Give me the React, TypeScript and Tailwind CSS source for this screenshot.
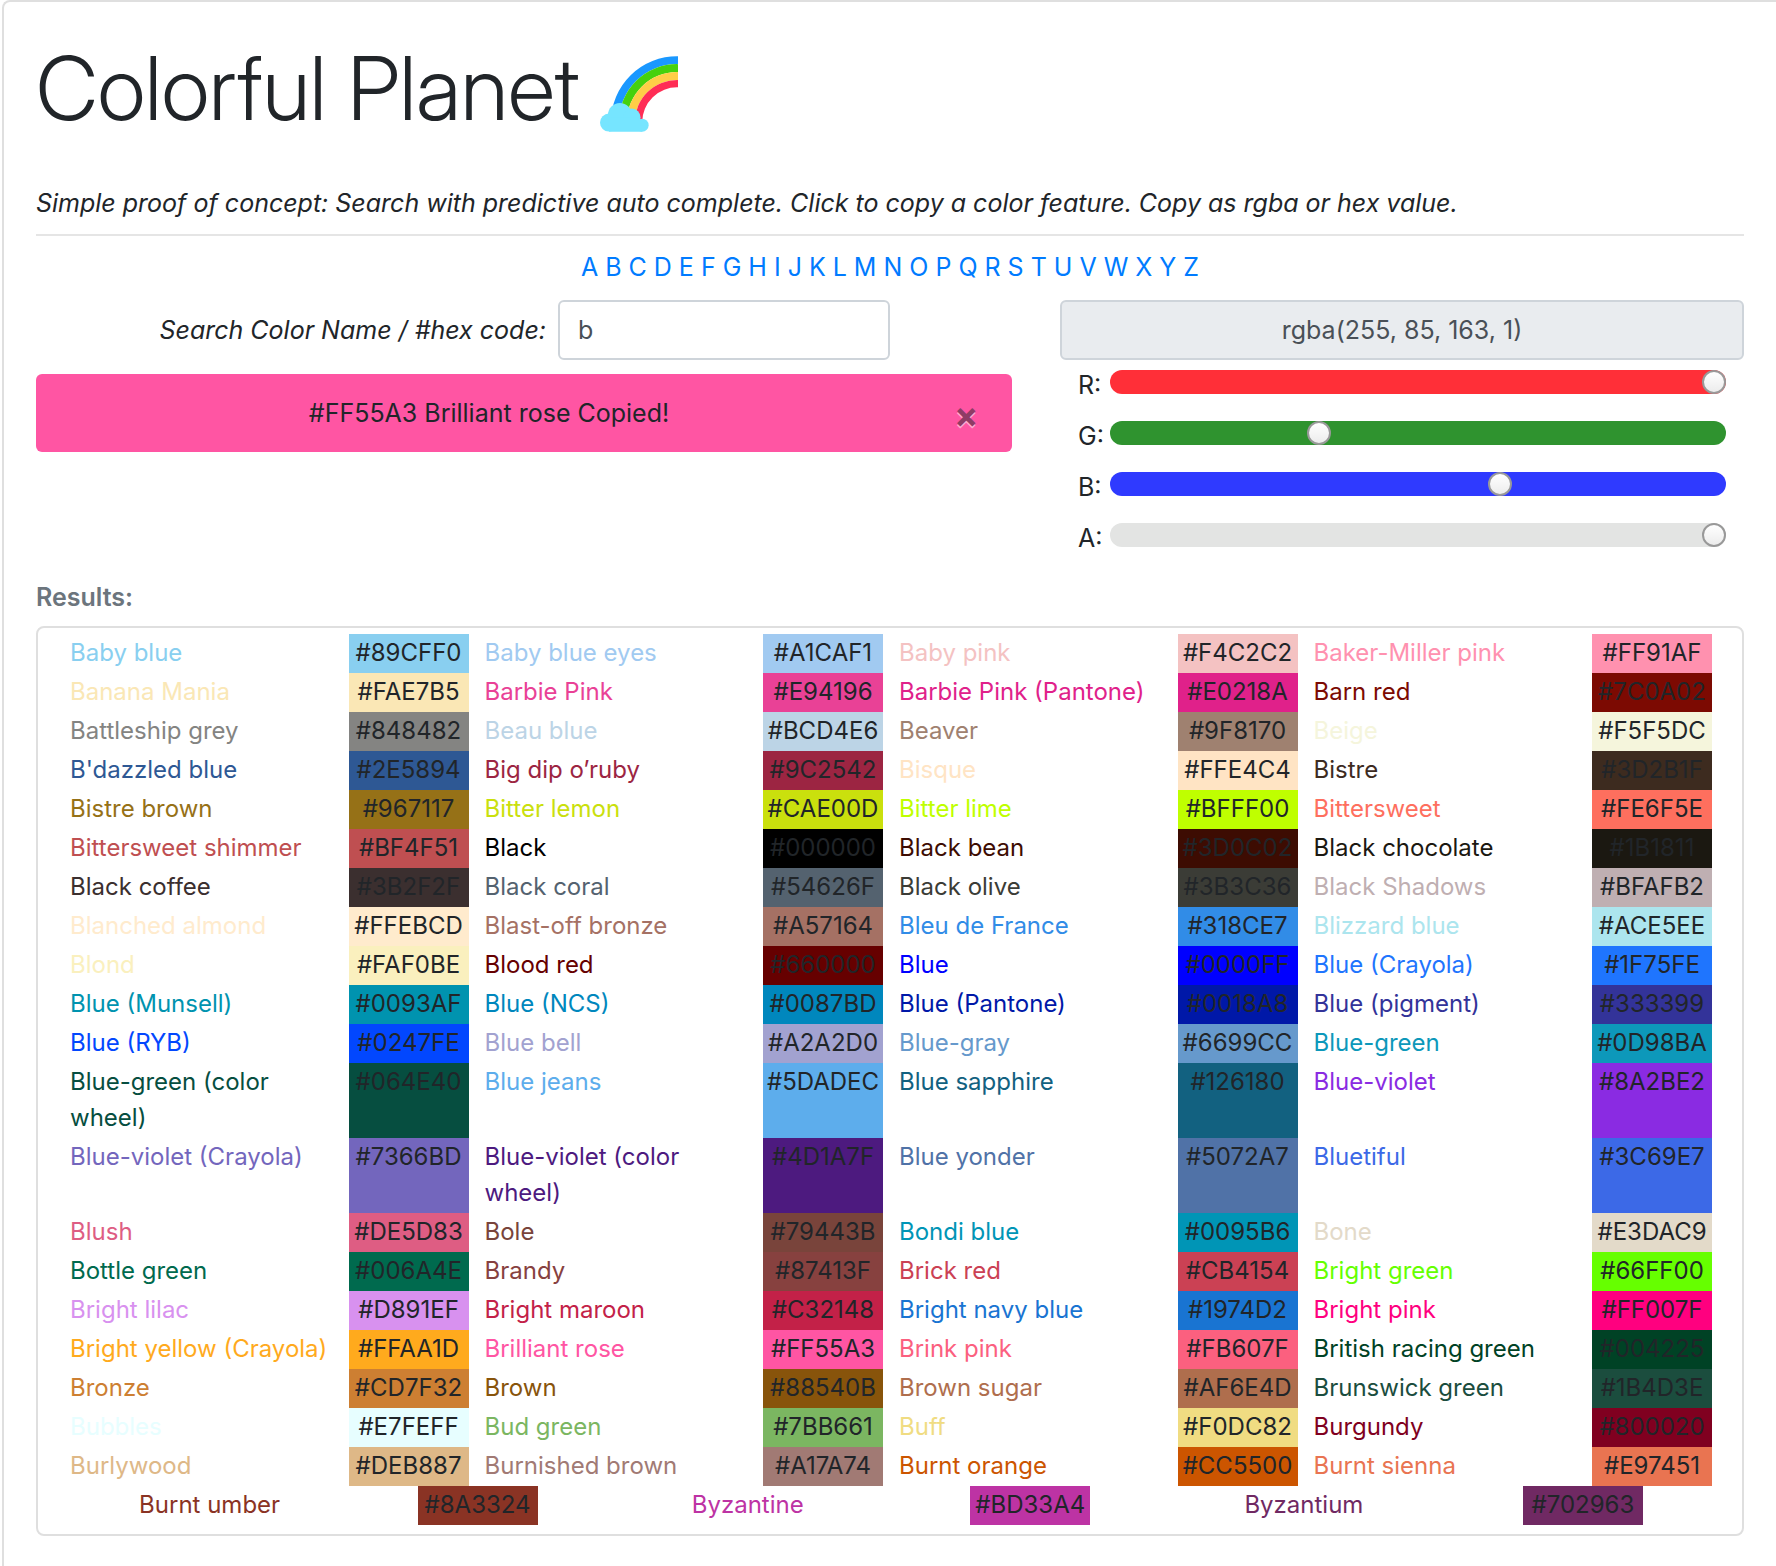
import { useState } from "react";

type Swatch = [name: string, hex: string];

const colors: Swatch[] = [
  ["Baby blue", "#89CFF0"],
  ["Baby blue eyes", "#A1CAF1"],
  ["Baby pink", "#F4C2C2"],
  ["Baker-Miller pink", "#FF91AF"],
  ["Banana Mania", "#FAE7B5"],
  ["Barbie Pink", "#E94196"],
  ["Barbie Pink (Pantone)", "#E0218A"],
  ["Barn red", "#7C0A02"],
  ["Battleship grey", "#848482"],
  ["Beau blue", "#BCD4E6"],
  ["Beaver", "#9F8170"],
  ["Beige", "#F5F5DC"],
  ["B'dazzled blue", "#2E5894"],
  ["Big dip o’ruby", "#9C2542"],
  ["Bisque", "#FFE4C4"],
  ["Bistre", "#3D2B1F"],
  ["Bistre brown", "#967117"],
  ["Bitter lemon", "#CAE00D"],
  ["Bitter lime", "#BFFF00"],
  ["Bittersweet", "#FE6F5E"],
  ["Bittersweet shimmer", "#BF4F51"],
  ["Black", "#000000"],
  ["Black bean", "#3D0C02"],
  ["Black chocolate", "#1B1811"],
  ["Black coffee", "#3B2F2F"],
  ["Black coral", "#54626F"],
  ["Black olive", "#3B3C36"],
  ["Black Shadows", "#BFAFB2"],
  ["Blanched almond", "#FFEBCD"],
  ["Blast-off bronze", "#A57164"],
  ["Bleu de France", "#318CE7"],
  ["Blizzard blue", "#ACE5EE"],
  ["Blond", "#FAF0BE"],
  ["Blood red", "#660000"],
  ["Blue", "#0000FF"],
  ["Blue (Crayola)", "#1F75FE"],
  ["Blue (Munsell)", "#0093AF"],
  ["Blue (NCS)", "#0087BD"],
  ["Blue (Pantone)", "#0018A8"],
  ["Blue (pigment)", "#333399"],
  ["Blue (RYB)", "#0247FE"],
  ["Blue bell", "#A2A2D0"],
  ["Blue-gray", "#6699CC"],
  ["Blue-green", "#0D98BA"],
  ["Blue-green (color wheel)", "#064E40"],
  ["Blue jeans", "#5DADEC"],
  ["Blue sapphire", "#126180"],
  ["Blue-violet", "#8A2BE2"],
  ["Blue-violet (Crayola)", "#7366BD"],
  ["Blue-violet (color wheel)", "#4D1A7F"],
  ["Blue yonder", "#5072A7"],
  ["Bluetiful", "#3C69E7"],
  ["Blush", "#DE5D83"],
  ["Bole", "#79443B"],
  ["Bondi blue", "#0095B6"],
  ["Bone", "#E3DAC9"],
  ["Bottle green", "#006A4E"],
  ["Brandy", "#87413F"],
  ["Brick red", "#CB4154"],
  ["Bright green", "#66FF00"],
  ["Bright lilac", "#D891EF"],
  ["Bright maroon", "#C32148"],
  ["Bright navy blue", "#1974D2"],
  ["Bright pink", "#FF007F"],
  ["Bright yellow (Crayola)", "#FFAA1D"],
  ["Brilliant rose", "#FF55A3"],
  ["Brink pink", "#FB607F"],
  ["British racing green", "#004225"],
  ["Bronze", "#CD7F32"],
  ["Brown", "#88540B"],
  ["Brown sugar", "#AF6E4D"],
  ["Brunswick green", "#1B4D3E"],
  ["Bubbles", "#E7FEFF"],
  ["Bud green", "#7BB661"],
  ["Buff", "#F0DC82"],
  ["Burgundy", "#800020"],
  ["Burlywood", "#DEB887"],
  ["Burnished brown", "#A17A74"],
  ["Burnt orange", "#CC5500"],
  ["Burnt sienna", "#E97451"],
  ["Burnt umber", "#8A3324"],
  ["Byzantine", "#BD33A4"],
  ["Byzantium", "#702963"],
];

const letters = "ABCDEFGHIJKLMNOPQRSTUVWXYZ".split("");

const channels = [
  { id: "R", max: 255, start: 255, track: "bg-[#ff2f38]" },
  { id: "G", max: 255, start: 85, track: "bg-[#2f932f]" },
  { id: "B", max: 255, start: 163, track: "bg-[#2f3aff]" },
  { id: "A", max: 1, start: 1, track: "bg-[#e3e4e3]" },
];

function Rainbow() {
  return (
    <svg viewBox="113 78 235 228" className="mt-3 h-[76px] w-[78px]" role="img" aria-label="rainbow">
      <path d="M146 277A199 199 0 0 1 348 78V102A175 175 0 0 0 170 277Z" fill="#1a98ff" />
      <path d="M170 277A175 175 0 0 1 348 102V126A151 151 0 0 0 194 277Z" fill="#46d10d" />
      <path d="M194 277A151 151 0 0 1 348 126V150A127 127 0 0 0 218 277Z" fill="#ffce47" />
      <path d="M218 277A127 127 0 0 1 348 150V172A105 105 0 0 0 240 277Z" fill="#ff2d55" />
      <g fill="#76e5ff">
        <circle cx="140" cy="278" r="27" />
        <circle cx="173" cy="255" r="36" />
        <circle cx="209" cy="262" r="26" />
        <circle cx="240" cy="286" r="19.500" />
        <path d="M140 262H234V286H240V305.500H140Z" />
      </g>
    </svg>
  );
}

function Slider({ channel, value, onChange }: { channel: (typeof channels)[number]; value: number; onChange: (v: number) => void }) {
  return (
    <div className="flex items-end">
      <label htmlFor={channel.id} className="w-8 leading-[18px]">
        {channel.id}:
      </label>
      <input
        id={channel.id}
        type="range"
        min={0}
        max={channel.max}
        step={channel.max === 1 ? 0.01 : 1}
        value={value}
        onChange={(e) => onChange(Number(e.target.value))}
        className={
          "h-6 min-w-0 flex-1 appearance-none rounded-full [&::-webkit-slider-thumb]:size-6 [&::-webkit-slider-thumb]:appearance-none [&::-webkit-slider-thumb]:rounded-full [&::-webkit-slider-thumb]:border-2 [&::-webkit-slider-thumb]:border-[#999] [&::-webkit-slider-thumb]:bg-linear-to-b [&::-webkit-slider-thumb]:from-white [&::-webkit-slider-thumb]:to-[#ececec] " +
          channel.track
        }
      />
    </div>
  );
}

export default function App() {
  const [query, setQuery] = useState("b");
  const [rgba, setRgba] = useState(channels.map((c) => c.start));
  const [copied, setCopied] = useState<Swatch | null>(["Brilliant rose", "#FF55A3"]);

  return (
    <main className="ml-[2px] min-h-screen rounded-tl-lg border-t-2 border-l-2 border-[#dfdfdf] bg-white pt-9 pr-8 pb-7 pl-8 font-['Inter',sans-serif] text-[25px] leading-9 text-[#212529]">
      <h1 className="flex items-center gap-5 font-['Inter_Display','Inter',sans-serif] text-[88px] leading-[100px] font-light">
        Colorful Planet <Rainbow />
      </h1>
      <p className="mt-[47px] italic">
        Simple proof of concept: Search with predictive auto complete. Click to copy a color feature. Copy as rgba or hex value.
      </p>
      <hr className="mt-[13px] border-t-2 border-[#e5e5e5]" />

      <nav className="mt-[13px] flex justify-center gap-[7px] text-[#007bff]">
        {letters.map((l) => (
          <a key={l} href={"#" + l}>
            {l}
          </a>
        ))}
      </nav>

      <div className="mt-[15px] grid grid-cols-[976fr_684fr] gap-12">
        <div className="flex flex-col gap-[14px]">
          <div className="flex items-center gap-3 pr-[122px]">
            <label htmlFor="search" className="flex-1 text-right italic">
              Search Color Name / #hex code:
            </label>
            <input
              id="search"
              value={query}
              onChange={(e) => setQuery(e.target.value)}
              className="h-[60px] w-[332px] rounded-md border-2 border-[#ced4da] px-[18px] text-[#495057]"
            />
          </div>
          {copied && (
            <div role="alert" className="flex h-[78px] items-center gap-3 rounded-md bg-[#ff55a3]">
              <span className="flex-1 text-center">
                {copied[1]} {copied[0]} Copied!
              </span>
              <button
                type="button"
                aria-label="Close"
                onClick={() => setCopied(null)}
                className="mr-[34px] w-6 pt-1 text-[36px] leading-9 font-bold opacity-50 text-shadow-[0_2px_0_#fff]"
              >
                ×
              </button>
            </div>
          )}
        </div>

        <div className="flex flex-col">
          <input
            readOnly
            aria-label="Current color"
            value={`rgba(${rgba.join(", ")})`}
            className="h-[60px] w-full rounded-md border-2 border-[#ced4da] bg-[#e9ecef] text-center text-[#495057]"
          />
          <div className="mt-[10px] flex flex-col gap-[27px] px-[18px]">
            {channels.map((c, i) => (
              <Slider key={c.id} channel={c} value={rgba[i]} onChange={(v) => setRgba(rgba.map((o, j) => (j === i ? v : o)))} />
            ))}
          </div>
        </div>
      </div>

      <h2 className="mt-8 font-semibold text-[#6c757d]">Results:</h2>
      <ul className="mt-[11px] flex flex-wrap justify-around rounded-lg border-2 border-[#dfdfdf] pt-[6px] pr-[30px] pb-[9px] pl-4 text-2xl leading-9">
        {colors.map(([name, hex]) => (
          <li key={name} className="flex w-1/4 pl-4">
            <span className="flex-1 pt-px pr-2 pb-[2px]" style={{ color: hex }}>
              {name}
            </span>
            <button
              type="button"
              onClick={() => setCopied([name, hex])}
              className="flex w-[120px] items-start justify-center pt-px pb-[2px]"
              style={{ backgroundColor: hex }}
            >
              {hex}
            </button>
          </li>
        ))}
      </ul>
    </main>
  );
}
